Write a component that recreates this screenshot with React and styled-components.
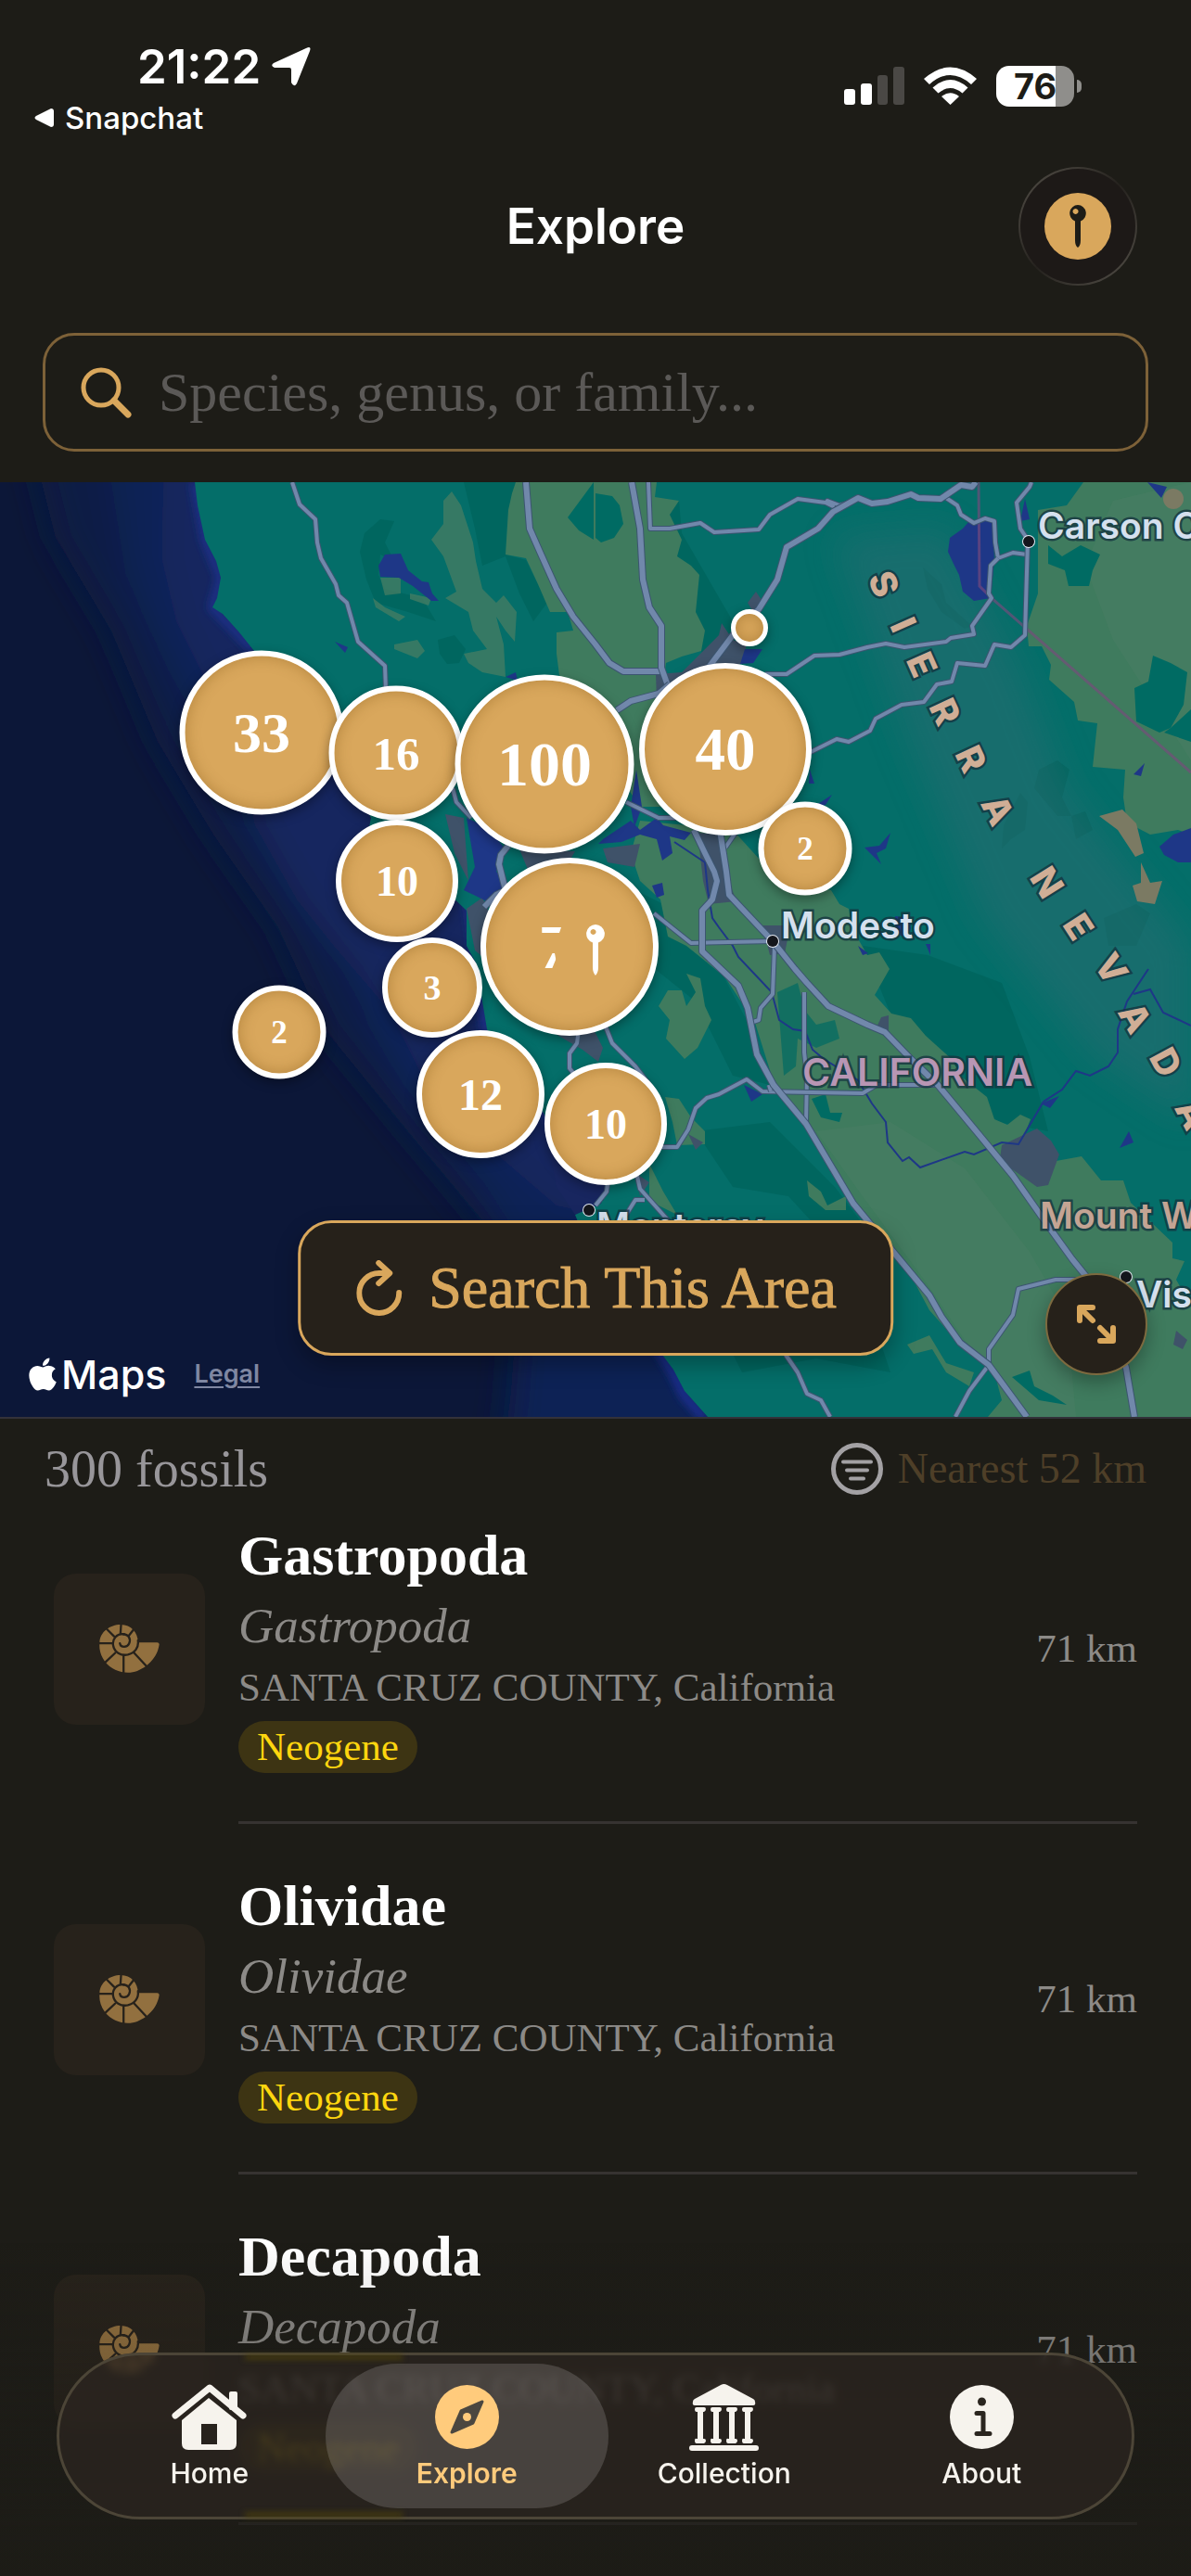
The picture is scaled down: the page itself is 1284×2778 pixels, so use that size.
import React from 'react'
import styled, { createGlobalStyle, ThemeProvider } from 'styled-components'
import { FaApple } from 'react-icons/fa'

const theme = {
  colors: {
    bg: '#1d1c17',
    gold: '#d9a75c',
    white: '#ffffff',
    muted: '#8c8a87',
    panel: '#26211a',
    line: '#363331',
    cream: '#f6f3ed',
  },
  fonts: {
    serif: '"Liberation Serif", "Times New Roman", serif',
    sans: 'Inter, "Liberation Sans", sans-serif',
  },
}

const clusters = [
  { x: 808, y: 157, size: 40 },
  { x: 282, y: 270, size: 177, count: 33 },
  { x: 782, y: 288, size: 186, count: 40 },
  { x: 427, y: 292, size: 145, count: 16 },
  { x: 587, y: 304, size: 193, count: 100 },
  { x: 868, y: 395, size: 101, count: 2 },
  { x: 428, y: 430, size: 132, count: 10 },
  { x: 466, y: 545, size: 108, count: 3 },
  { x: 614, y: 501, size: 192, count: 71, here: true },
  { x: 301, y: 593, size: 101, count: 2 },
  { x: 518, y: 660, size: 138, count: 12 },
  { x: 653, y: 692, size: 132, count: 10 },
]

const fossils = [
  { name: 'Gastropoda', place: 'SANTA CRUZ COUNTY, California', period: 'Neogene', distance: '71 km' },
  { name: 'Olividae', place: 'SANTA CRUZ COUNTY, California', period: 'Neogene', distance: '71 km' },
  { name: 'Decapoda', place: 'SANTA CRUZ COUNTY, California', period: 'Neogene', distance: '71 km' },
]

const majorRoads = [
  '567,0 571,50 582,75 600,115 618,145 642,175 657,195 672,204 713,204',
  '681,0 690,50 693,105 700,135 713,155 713,200 722,225',
  '1052,0 1048,5 1036,3 1014,18 990,17 982,13 957,21 940,23 925,17 898,32 882,50 848,70 838,105 818,137 790,165 760,205',
  '665,246 680,236 710,228 722,218',
  '748,375 760,400 770,420 773,430 768,450 757,462 757,506 796,543 806,567 816,617 834,650 869,692 920,778 1002,877 1015,900 1035,928 1066,952 1107,1008',
  '776,375 783,420 786,445 800,460 833,495 857,525 870,540 893,565 935,585 954,593 982,622 1011,650 1055,703 1092,748 1125,795 1156,838 1190,880 1214,955 1223,1008',
  '548,392 540,402 538,412 545,440 535,445 522,458',
]

const minorRoads = [
  '315,0 323,24 340,40 342,65 346,82 362,110 365,122 374,130 386,172 415,198 416,225',
  '488,330 492,345 508,362',
  '699,0 701,50 722,50 755,44 770,54 818,51 830,35 860,18 890,22 898,26 892,20 905,25 915,22',
  '1020,17 1032,25 1036,35 1050,44 1062,39 1072,42 1073,65 1076,82 1092,76 1107,78',
  '1112,0 1110,5 1096,22 1100,50 1108,62 1105,165 1090,178 1072,175 1062,198 1032,195 1026,215 1010,218 996,237 972,240 944,255 938,268 915,280 902,277 872,292',
  '1076,82 1068,90 1066,120 1069,125 1048,155 1050,164 1025,168 1020,172 975,178 955,174 935,178 905,186 878,187 848,207 825,207',
  '675,345 710,362 735,362',
  '705,465 745,497 833,495',
  '793,378 782,394',
  '835,500 833,552 820,567 818,580 812,582',
  '867,550 867,615 870,640 869,690',
  '650,580 660,605 685,630 704,655',
  '712,717 730,717 742,698 750,675 762,664 775,660 805,644 822,657 930,659 945,650 1008,650',
  '829,650 831,657',
  '642,780 654,765 656,750',
  '685,740 690,762 722,798',
  '675,790 685,774 695,774',
  '624,590 622,605 614,616 614,632 622,642',
  '847,941 860,960 870,983 885,990 895,1008',
  '1066,952 1045,980 1030,1008',
  '1066,952 1066,935 1092,898 1098,870 1138,860 1180,860',
]

const sierra = [
  ['S', 952, 110, 68],
  ['I', 973, 154, 66],
  ['E', 993, 197, 66],
  ['R', 1018, 248, 65],
  ['R', 1046, 299, 65],
  ['A', 1075, 354, 63],
  ['N', 1128, 432, 58],
  ['E', 1162, 480, 57],
  ['V', 1197, 525, 57],
  ['A', 1223, 578, 60],
  ['D', 1256, 626, 62],
  ['A', 1284, 682, 62],
]

const places = [
  { name: 'Carson City', x: 1119, y: 61, dot: [1109, 64] },
  { name: 'Modesto', x: 842, y: 492, dot: [833, 495] },
  { name: 'Monterey', x: 643, y: 816, dot: [635, 785] },
  { name: 'Visalia', x: 1225, y: 890, dot: [1214, 857] },
]

const BaseMap = () => (
  <MapCanvas viewBox='0 0 1284 1008' preserveAspectRatio='xMinYMin slice' aria-hidden='true'>
    <defs>
      <filter id='soft' x='-20%' y='-20%' width='140%' height='140%'>
        <feGaussianBlur stdDeviation='18' />
      </filter>
      <filter id='shore' x='-20%' y='-20%' width='140%' height='140%'>
        <feGaussianBlur stdDeviation='5' />
      </filter>
    </defs>

    {/* ocean */}
    <rect width='1284' height='1008' fill='#0c1738' />
    <g filter='url(#soft)'>
      <path fill='#0c1a44' d='M30 -60 L60 60 120 160 170 280 230 380 300 480 350 590 440 700 540 820 560 920 540 1060 H800 V-60Z' />
      <path fill='#0d2055' d='M110 -60 L135 100 180 200 230 290 300 400 370 500 400 590 450 680 520 760 560 860 545 1060 H860 L600 600 460 300 300 200 230 -60Z' />
      <path fill='#18265f' d='M178 -60 L174 80 190 150 215 200 255 280 275 370 320 450 360 500 420 570 460 650 530 720 600 780 640 790 680 700 540 400 400 280 270 170 240 -60Z' />
    </g>
    <path fill='none' stroke='#1c3290' strokeWidth='8' filter='url(#shore)' d='M210 0 L221 62 238 103 229 135 274 182 M505 450 L524 590 600 700' />
    <path fill='none' stroke='#1b2f92' strokeWidth='10' filter='url(#shore)' d='M640 845 L690 905 714 941 726 960 738 985 760 1010' />

    {/* land */}
    <path
      fill='#046e69'
      d='M210 0 L213 25 221 62 233 85 238 103 234 125 229 135 240 142 258 162 274 182 310 240 345 300 385 335 400 362 398 372 420 395 480 440 503 462 503 500 514 520 520 560 525 590 560 650 586 680 600 710 640 735 657 755 650 775 628 778 620 790 640 840 690 900 714 941 726 957 738 980 763 1008 H1284 V0Z'
    />
    <g fill='#00665f'>
      <path d='M393 55 L410 40 425 42 415 65 425 85 410 78 408 100 415 115 455 125 470 150 440 140 405 130 395 105 388 75Z' />
      <path d='M500 0 H556 L548 30 545 78 567 84 590 130 575 150 560 120 545 80 520 90 512 50Z' />
      <path d='M472 170 L490 165 502 180 495 195 482 196 474 185Z' />
      <path d='M708 30 L732 20 735 55 790 150 800 180 760 190 740 150Z' />
      <path d='M995 92 L1015 110 1020 130 1048 155 1040 158 1015 140 1000 115Z' />
      <path d='M1120 310 L1140 300 1153 310 1145 340 1155 360 1140 360 1115 330Z' />
      <path d='M1100 335 L1108 345 1105 375 1090 385 1080 395 1082 370Z' />
      <path d='M930 500 L1000 510 1080 540 1110 620 1130 700 1075 690 1035 640 998 597 960 573Z' />
      <path d='M685 440 L715 455 740 500 780 533 810 590 830 650 790 640 750 560 700 520Z' />
      <path d='M750 700 L830 690 900 760 930 800 905 830 850 770 790 760Z' />
      <path d='M770 900 L900 880 950 930 960 960 880 945 800 960Z' />
      <path d='M1155 360 L1170 355 1178 375 1160 385Z' />
      <path d='M1190 470 L1225 455 1240 465 1225 500 1195 500Z' />
    </g>
    <path
      fill='#2a6d72'
      opacity='.5'
      filter='url(#soft)'
      d='M900 60 L1020 50 1100 200 1150 330 1220 420 1284 500 V690 L1180 620 1060 470 980 280Z'
    />

    {/* valleys and farmland */}
    <g fill='#3f7b5e'>
      <path d='M556 0 L552 12 548 30 545 78 567 82 580 110 593 140 612 140 618 160 600 162 600 185 603 208 620 240 670 320 690 350 730 350 712 240 718 195 735 188 756 182 760 160 750 140 754 100 745 90 730 80 735 62 722 35 732 20 706 16 708 0Z' />
      <path d='M690 365 L790 375 840 430 896 440 905 455 915 460 918 480 935 510 948 507 959 525 943 553 961 573 982 578 998 597 1027 623 1035 640 1064 663 1072 687 1086 693 1100 682 1111 687 1104 705 1133 733 1166 727 1187 753 1211 753 1219 777 1264 820 1264 837 1277 840 1268 860 1281 883 1284 890 V1008 H1065 L1080 990 1072 960 1035 930 1002 893 970 833 929 790 888 727 834 647 814 583 781 533 740 500 720 490 712 450 690 430 680 400Z' />
      <path d='M1168 0 L1150 25 1119 30 1119 120 1107 155 1109 177 1123 177 1133 197 1131 213 1158 237 1162 257 1183 260 1178 307 1213 310 1211 340 1215 367 1240 380 1270 375 1284 380 V0Z' />
      <path d='M978 930 L1002 920 1020 950 1050 960 1045 975 1020 960 1005 935 985 940Z' />
      <path d='M740 565 L750 550 740 530 755 535 760 565 767 580 752 610 738 622 718 600 722 580 710 565 720 548 735 548Z' />
      <path d='M717 663 L732 665 745 685 760 700 760 714 730 715 725 690Z' />
      <path d='M700 735 L715 765 730 790 700 775Z' />
      <path d='M870 753 L885 765 892 780 912 770 912 785 890 785 872 770Z' />
    </g>
    <g fill='#477d63'>
      <path d='M487 10 L497 25 510 65 513 85 520 115 535 130 543 122 557 140 555 172 545 160 535 145 543 175 545 210 520 205 505 195 500 185 525 180 510 160 505 140 480 125 492 118 478 80 465 62 478 45 478 20Z' opacity='.75' />
      <path d='M410 103 H432 V120 L415 122Z M402 125 L415 135 437 145 430 150 405 135Z M442 120 L465 125 462 133 442 126Z M425 175 L450 170 458 182 450 190 425 180Z' opacity='.75' />
      <path d='M880 700 L960 690 1040 740 1110 830 1150 900 1160 1008 H1110 L1040 925 1000 865 930 770Z' opacity='.7' />
      <path d='M1200 20 L1284 0 V300 L1200 170 1170 90Z' opacity='.7' />
    </g>
    <g fill='#006b63'>
      <path d='M642 12 L660 15 668 25 672 45 662 60 648 65 642 60Z' />
      <path d='M640 0 L612 38 624 52 640 62Z' />
      <path d='M1130 68 L1145 80 1165 68 1186 78 1178 95 1174 112 1152 112 1148 95 1130 88Z' />
      <path d='M1243 187 L1262 195 1280 205 1276 240 1262 265 1250 270 1225 258 1223 222 1238 215Z' />
      <path d='M1262 265 L1284 245 V280 L1255 270Z' />
      <path d='M838 550 L845 640 858 630 860 600 880 610 905 600 900 580 880 585 868 570 860 540Z' opacity='.7' />
      <path d='M875 665 L890 660 895 680 908 680 905 690 885 685Z' />
      <path d='M1091 965 L1110 958 1115 975 1135 985 1150 995 1120 990Z' />
    </g>
    <g fill='#3f5269'>
      <path d='M775 165 L778 152 790 170 805 175 800 195 770 212 722 228 708 235 707 207 735 205 750 190Z' />
      <path d='M815 118 L823 130 815 145 806 130Z' />
      <path d='M752 378 L778 380 782 420 794 452 764 455 758 430Z' />
      <path d='M822 478 L852 478 846 508 830 510Z' />
      <path d='M1080 715 L1118 697 1133 710 1142 725 1130 758 1118 760 1090 740 1078 730Z' />
      <path d='M950 577 L958 575 958 592 945 588Z' />
      <path d='M503 460 L520 448 535 480 530 520 512 505Z M590 590 L640 590 650 610 645 625 628 612Z' />
      <path d='M560 396 L620 398 610 415 570 420Z M480 358 L500 362 505 430 490 400Z' />
      <path d='M650 395 L690 390 684 415 655 410Z M742 703 L758 712 750 720Z M685 745 L700 755 690 770Z' />
      <path d='M1268 915 L1280 925 1275 935 1265 930Z' />
    </g>

    {/* lakes, bay and delta */}
    <g fill='#1e3787'>
      <path d='M408 90 L415 78 432 77 440 95 455 107 462 108 466 120 473 128 465 128 445 112 430 103 410 102Z' />
      <path d='M361 172 L375 178 372 184Z' />
      <path d='M1045 42 L1070 40 1072 85 1068 125 1050 128 1038 118 1034 100 1028 88 1022 75 1024 60 1038 50Z' />
      <path d='M1105 18 L1110 40 1100 42Z M1237 0 L1258 5 1252 17Z' />
      <path d='M803 180 L822 180 812 195 798 196Z M545 210 L556 205 558 214Z' />
      <path d='M503 362 L525 372 545 396 535 420 560 445 540 470 525 452 500 440 512 415Z' />
      <path d='M650 385 L680 365 690 375 708 362 715 370 745 378 738 386 722 382 725 400 714 408 708 385 690 380 670 388 645 390Z' />
      <path d='M686 310 L692 350 684 372 680 350Z M873 310 L878 325 872 325Z M885 345 L897 337 890 348 870 352Z' />
      <path d='M932 394 L948 392 960 378 955 395 945 400 950 412Z' />
      <path d='M965 468 L980 470 982 482 972 490 965 480Z M925 500 L936 508 930 510Z M998 498 H1003 V510Z' />
      <path d='M703 435 L714 432 716 445 708 448Z' />
      <path d='M802 650 L822 660 810 668Z' />
      <path d='M1250 393 L1265 380 1284 373 V410 L1270 410 1255 402Z' />
      <path d='M1222 315 L1234 303 1230 317Z M1217 700 L1222 712 1207 718Z M1122 670 L1142 662 1132 675Z' />
      <path d='M592 720 L640 738 655 755 648 778 620 790 600 760Z' fill='#18265f' />
    </g>
    <g fill='#7b7a63'>
      <path d='M1185 360 L1210 353 1225 368 1233 400 1224 404 1205 375Z' />
      <path d='M1230 410 L1240 432 1253 430 1245 455 1226 452 1221 435 1230 432Z' />
      <circle cx='1265' cy='18' r='11' />
    </g>

    <g fill='none' stroke='#1e3787' strokeWidth='2'>
      <polyline points='727,388 760,410 763,440 768,470 775,480 790,500 796,512 832,550 840,580 855,590 868,592 876,612 888,622 925,645 940,670 955,690 957,712 973,732 980,728 992,739 1040,722 1050,725 1080,712 1098,714 1125,668 1145,655 1160,635 1175,640 1195,630 1205,615 1205,590 1215,560 1238,525' />
      <polyline points='1222,552 1240,547 1254,572 1284,586' />
    </g>
    <polyline points='1055,0 1056,112 1070,126 1284,313' fill='none' stroke='#7a4a7c' strokeWidth='3' opacity='.65' />

    {/* roads, dark casing under a lighter line */}
    <g fill='none' strokeLinejoin='round'>
      {minorRoads.map((points) => (
        <g key={points}>
          <polyline points={points} stroke='#3c5570' strokeWidth='6' />
          <polyline points={points} stroke='#7188ab' strokeWidth='4' />
        </g>
      ))}
      {majorRoads.map((points) => (
        <g key={points}>
          <polyline points={points} stroke='#3c5570' strokeWidth='8' />
          <polyline points={points} stroke='#7188ab' strokeWidth='6' />
        </g>
      ))}
    </g>

    <MapText $color='#d0ae96' $bold textAnchor='middle'>
      {sierra.map(([letter, x, y, angle]) => (
        <text key={x} transform={`translate(${x} ${y}) rotate(${angle})`} dy='13'>
          {letter}
        </text>
      ))}
    </MapText>
    <MapText $color='#b896b4' $size={41}>
      <text x='865' y='651'>CALIFORNIA</text>
    </MapText>
    <MapText $color='#c4a494'>
      <text x='1121' y='805'>Mount Whitney</text>
    </MapText>
    <MapText $color='#d5e0ee'>
      {places.map((place) => (
        <g key={place.name}>
          <circle cx={place.dot[0]} cy={place.dot[1]} r='6' fill='#14161c' stroke='#e4eaf2' strokeWidth='2' />
          <text x={place.x} y={place.y}>{place.name}</text>
        </g>
      ))}
    </MapText>
  </MapCanvas>
)

const PinIcon = () => (
  <svg width='20' height='46' viewBox='0 0 20 46'>
    <path
      fill='currentColor'
      fillRule='evenodd'
      d='M10 0a9 9 0 0 1 3 17.400V38q0 6-3 8-3-2-3-8V17.400A9 9 0 0 1 10 0ZM7.500 4a3 3 0 1 0 .1 0Z'
    />
  </svg>
)

const AmmoniteIcon = () => (
  <svg width='65' height='52' viewBox='143 188 194 157'>
    <path
      fill='#92703f'
      d='M330 246Q338 246 337 254C333 280 318 305 295 322C275 336 257 344 235 344C208 344 178 332 160 308C146 288 141 270 143 245C145 212 176 188 212 188C246 188 268 214 268 246Z'
    />
    <g fill='none' stroke='#27221b' strokeWidth='7' strokeLinecap='round'>
      <path d='M222 219C198 216 184 236 187 255C190 278 212 290 235 286C258 281 271 262 268 240' />
      <path d='M209 249C212 264 233 263 239 250C246 234 237 219 218 219' />
      <path d='M213 186L211 217M252 206L238 224M167 203L190 226M141 249H187M160 312L194 280M221 347V288M296 324L256 281' />
    </g>
  </svg>
)

const HomeIcon = () => (
  <svg width='81' height='71' viewBox='0 0 81 71' fill='currentColor'>
    <path d='M4 34L41 4L77 34' fill='none' stroke='currentColor' strokeWidth='7' strokeLinecap='round' strokeLinejoin='round' />
    <rect x='62' y='8' width='9' height='20' rx='2' />
    <path fillRule='evenodd' d='M11 39L40 15L70 39V64Q70 71 63 71H18Q11 71 11 64ZM32 43V65H49V43Z' />
  </svg>
)

const CompassIcon = () => (
  <svg width='69' height='69' viewBox='0 0 69 69'>
    <circle cx='34.500' cy='34.500' r='34.500' fill='currentColor' />
    <path d='M51 18L41 41L18 51L28 28Z' fill='#4b4740' stroke='#4b4740' strokeWidth='3' strokeLinejoin='round' />
    <circle cx='34.500' cy='34.500' r='4.500' fill='currentColor' />
  </svg>
)

const MuseumIcon = () => (
  <svg width='75' height='73' viewBox='0 0 75 73' fill='currentColor'>
    <path d='M6 24Q3 24 4 20Q4 18 6 17L34 2Q37.500 0 41 2L69 17Q71 18 71 20Q72 24 69 24Z' />
    {[12, 29, 46, 63].map((x) => (
      <path key={x} d={`M${x - 6} 28q0-2 2-2h8q2 0 2 2t-2 3h-1v29h1q2 0 2 2t-2 3h-8q-2 0-2-3t2-2h1V31h-1q-2 0-2-3Z`} />
    ))}
    <rect y='67' width='75' height='6' rx='3' />
  </svg>
)

const InfoIcon = () => (
  <svg width='69' height='69' viewBox='0 0 69 69'>
    <circle cx='34.500' cy='34.500' r='34.500' fill='currentColor' />
    <circle cx='34.500' cy='18' r='4.500' fill='#2a251f' />
    <path d='M29 30.500H36V52M29 52.500H43' fill='none' stroke='#2a251f' strokeWidth='5' strokeLinecap='round' strokeLinejoin='round' />
  </svg>
)

const tabs = [
  { label: 'Home', icon: HomeIcon },
  { label: 'Explore', icon: CompassIcon, active: true },
  { label: 'Collection', icon: MuseumIcon },
  { label: 'About', icon: InfoIcon },
]

const App = () => {
  return (
    <ThemeProvider theme={theme}>
      <GlobalStyle />
      <Screen>
        <StatusBar>
          <StatusLeft>
            <Clock>
              21:22
              <svg width='42' height='42' viewBox='0 0 42 42'>
                <path d='M37 1Q43 -2 41 4L27 39Q24 44 21 38V24Q21 22 19 22L3 22Q-2 20 2 17Z' fill='#fff' />
              </svg>
            </Clock>
            <BackLink href='#snapchat'>
              <svg width='21' height='20' viewBox='0 0 21 20'>
                <path d='M18 0Q21 0 21 3V17Q21 20 18 20L2 12Q-1 10 2 8Z' fill='#fff' />
              </svg>
              Snapchat
            </BackLink>
          </StatusLeft>
          <StatusRight>
            <svg width='65' height='42' viewBox='0 0 65 42'>
              <rect x='0' y='24' width='12' height='17' rx='3' fill='#fff' />
              <rect x='18' y='18' width='12' height='23' rx='3' fill='#fff' />
              <rect x='36' y='9' width='11' height='32' rx='3' fill='#4a4845' />
              <rect x='53' y='0' width='12' height='41' rx='3' fill='#4a4845' />
            </svg>
            <svg width='57' height='42' viewBox='0 0 57 42' fill='#fff'>
              <path d='M28.500 41L19 32Q28.500 24.500 38 32Z' />
              <path d='M15.500 28.500L9.500 22.500Q28.500 5.500 47.500 22.500L41.500 28.500Q28.500 17.500 15.500 28.500Z' />
              <path d='M6 19L0 13Q28.500 -12 57 13L51 19Q28.500 -1 6 19Z' />
            </svg>
            <Battery>
              <BatteryBody>76</BatteryBody>
              <BatteryNub />
            </Battery>
          </StatusRight>
        </StatusBar>

        <Header>
          <Title>Explore</Title>
          <PinButton type='button' aria-label='My location'>
            <PinDisc>
              <PinIcon />
            </PinDisc>
          </PinButton>
        </Header>

        <SearchBox>
          <svg width='56' height='56' viewBox='0 0 56 56' fill='none' stroke='#d9a75c' strokeWidth='5' strokeLinecap='round'>
            <circle cx='22' cy='23' r='19' />
            <path d='M36 37L51 52' strokeWidth='7' />
          </svg>
          <SearchInput type='search' aria-label='Search fossils' placeholder='Species, genus, or family...' />
        </SearchBox>

        <MapPanel>
          <BaseMap />
          {clusters.map((cluster) => (
            <Cluster key={`${cluster.x}-${cluster.y}`} $x={cluster.x} $y={cluster.y} $size={cluster.size}>
              {cluster.count}
              {cluster.here && (
                <HereMark viewBox='0 0 192 192'>
                  <path fill='#d9a75c' d='M90 66H140V124H84L80 103H60V81H85Z' />
                  <path
                    fill='#fff'
                    fillRule='evenodd'
                    d='M124 72a10 10 0 0 1 3 19.500V118q0 6-3 9-3-3-3-9V91.500A10 10 0 0 1 124 72ZM121.500 77a3 3 0 1 0 .1 0Z'
                  />
                </HereMark>
              )}
            </Cluster>
          ))}
          <MapFooter>
            <MapBrand>
              <FaApple size='40' />
              Maps
            </MapBrand>
            <LegalLink href='#legal'>Legal</LegalLink>
          </MapFooter>
          <SearchArea type='button'>
            <svg width='50' height='60' viewBox='0 0 50 60' fill='none' stroke='currentColor' strokeWidth='6' strokeLinecap='round' strokeLinejoin='round'>
              <path d='M46 35A21.500 21.500 0 1 1 25 14H35' />
              <path d='M24 3L36 14L24 25' />
            </svg>
            Search This Area
          </SearchArea>
          <ExpandButton type='button' aria-label='Expand map'>
            <svg width='44' height='44' viewBox='0 0 44 44' fill='none' stroke='currentColor' strokeWidth='6' strokeLinecap='round' strokeLinejoin='round'>
              <path d='M4 18V4H18M5 5L18 18M40 26V40H26M39 39L26 26' />
            </svg>
          </ExpandButton>
        </MapPanel>

        <ListHeader>
          <Count>300 fossils</Count>
          <SortButton type='button'>
            <svg width='56' height='56' viewBox='0 0 56 56' fill='none' stroke='#a3a1a4' strokeWidth='4' strokeLinecap='round'>
              <circle cx='28' cy='28' r='25.500' strokeWidth='5' />
              <path d='M13 20.500H43M17 29.500H39M21 38.500H35' />
            </svg>
            Nearest 52 km
          </SortButton>
        </ListHeader>

        <List>
          {fossils.map((fossil) => (
            <Row key={fossil.name}>
              <Thumb>
                <AmmoniteIcon />
              </Thumb>
              <Details>
                <Name>{fossil.name}</Name>
                <Taxon>{fossil.name}</Taxon>
                <Place>{fossil.place}</Place>
                <Period>{fossil.period}</Period>
              </Details>
              <Distance>{fossil.distance}</Distance>
            </Row>
          ))}
        </List>

        <BottomFade />
        <TabBar>
          <Glint />
          {tabs.map(({ label, icon: Icon, active }) => (
            <Tab key={label} href={`#${label.toLowerCase()}`} $active={active}>
              <IconSlot>
                <Icon />
              </IconSlot>
              {label}
            </Tab>
          ))}
        </TabBar>
      </Screen>
    </ThemeProvider>
  )
}

const GlobalStyle = createGlobalStyle`
  * {
    box-sizing: border-box;
  }

  body {
    margin: 0;
    background: #1d1c17;
  }

  svg {
    display: block;
    flex-shrink: 0;
  }
`

const Screen = styled.main`
  position: relative;
  overflow: hidden;
  background: ${({ theme }) => theme.colors.bg};
  color: ${({ theme }) => theme.colors.white};
  font-family: ${({ theme }) => theme.fonts.serif};
`

const StatusBar = styled.div`
  display: flex;
  justify-content: space-between;
  align-items: flex-start;
  padding: 41px 118px 0 37px;
  font-family: ${({ theme }) => theme.fonts.sans};
`

const StatusLeft = styled.div`
  display: flex;
  flex-direction: column;
  gap: 4px;
`

const Clock = styled.div`
  display: flex;
  align-items: center;
  gap: 12px;
  padding-left: 111px;
  font-size: 51px;
  font-weight: 600;
  line-height: 62px;
`

const BackLink = styled.a`
  display: flex;
  align-items: center;
  gap: 12px;
  color: inherit;
  font-size: 33px;
  font-weight: 500;
  line-height: 40px;
  text-decoration: none;
`

const StatusRight = styled.div`
  display: flex;
  align-items: center;
  gap: 21px;
  padding-top: 30px;
`

const Battery = styled.div`
  display: flex;
  align-items: center;
  gap: 3px;
`

const BatteryBody = styled.div`
  width: 84px;
  height: 44px;
  border-radius: 14px;
  background: linear-gradient(90deg, #fff 76%, #8f8e8b 76%);
  color: ${({ theme }) => theme.colors.bg};
  font-size: 38px;
  font-weight: 700;
  line-height: 44px;
  text-align: center;
`

const BatteryNub = styled.div`
  width: 5px;
  height: 14px;
  border-radius: 0 6px 6px 0;
  background: #8f8e8b;
`

const Header = styled.header`
  display: grid;
  grid-template-columns: 1fr auto 1fr;
  align-items: center;
  padding: 33px 58px 51px;
`

const Title = styled.h1`
  grid-column: 2;
  margin: 0;
  font-family: ${({ theme }) => theme.fonts.sans};
  font-size: 53px;
  font-weight: 600;
  line-height: 64px;
`

const PinButton = styled.button`
  display: flex;
  align-items: center;
  justify-content: center;
  justify-self: end;
  width: 128px;
  height: 128px;
  padding: 0;
  border: 2px solid transparent;
  border-radius: 50%;
  background: linear-gradient(#1d1917, #1d1917) padding-box,
    linear-gradient(135deg, #55514a, #25221e 50%, #55514a) border-box;
`

const PinDisc = styled.span`
  display: flex;
  align-items: center;
  justify-content: center;
  width: 72px;
  height: 72px;
  border-radius: 50%;
  background: ${({ theme }) => theme.colors.gold};
  color: ${({ theme }) => theme.colors.bg};
`

const SearchBox = styled.label`
  display: flex;
  align-items: center;
  gap: 28px;
  height: 128px;
  margin: 0 46px 33px;
  padding: 0 38px;
  border: 3px solid #7d6138;
  border-radius: 34px;
`

const SearchInput = styled.input`
  flex: 1;
  min-width: 0;
  padding: 0;
  border: 0;
  outline: 0;
  background: transparent;
  color: ${({ theme }) => theme.colors.white};
  font-family: inherit;
  font-size: 60px;
  line-height: 72px;

  &::placeholder {
    color: #5b5957;
    opacity: 1;
  }
`

const MapPanel = styled.section`
  position: relative;
  height: 1010px;
  overflow: hidden;
  border-bottom: 2px solid #33323a;
`

const MapCanvas = styled.svg`
  width: 100%;
  height: 100%;
`

const MapText = styled.g`
  fill: ${({ $color }) => $color};
  stroke: rgba(20, 50, 62, 0.75);
  stroke-width: 5px;
  paint-order: stroke;
  font-family: ${({ theme }) => theme.fonts.sans};
  font-size: ${({ $size = 39 }) => $size}px;
  font-weight: ${({ $bold }) => ($bold ? 800 : 600)};
`

const Cluster = styled.div`
  position: absolute;
  left: ${({ $x }) => $x}px;
  top: ${({ $y }) => $y}px;
  display: flex;
  align-items: center;
  justify-content: center;
  width: ${({ $size }) => $size}px;
  height: ${({ $size }) => $size}px;
  transform: translate(-50%, -50%);
  border: ${({ $size }) => ($size > 60 ? 6 : 5)}px solid #fff;
  border-radius: 50%;
  background: ${({ theme }) => theme.colors.gold};
  box-shadow: 0 4px 12px rgba(0, 0, 0, 0.35), inset 0 0 16px rgba(110, 70, 10, 0.35);
  font-size: ${({ $size }) => Math.round($size * 0.35)}px;
  font-weight: 700;
`

const HereMark = styled.svg`
  position: absolute;
  inset: -6px;
`

const MapFooter = styled.div`
  position: absolute;
  left: 26px;
  bottom: 18px;
  display: flex;
  align-items: center;
  gap: 30px;
  font-family: ${({ theme }) => theme.fonts.sans};
`

const MapBrand = styled.span`
  display: flex;
  align-items: center;
  font-size: 43px;
  font-weight: 500;
  line-height: 56px;
`

const LegalLink = styled.a`
  color: #7f87a2;
  font-size: 27px;
  font-weight: 600;
  line-height: 32px;
  text-underline-offset: 4px;
`

const SearchArea = styled.button`
  position: absolute;
  left: 50%;
  bottom: 66px;
  display: flex;
  align-items: center;
  gap: 28px;
  height: 146px;
  padding: 0 58px 0 60px;
  transform: translateX(-50%);
  border: 3px solid ${({ theme }) => theme.colors.gold};
  border-radius: 36px;
  background: ${({ theme }) => theme.colors.panel};
  box-shadow: 0 10px 24px rgba(0, 0, 0, 0.3);
  color: ${({ theme }) => theme.colors.gold};
  font-family: inherit;
  font-size: 64px;
  line-height: 72px;
  white-space: nowrap;
  -webkit-text-stroke: 1px currentColor;
`

const ExpandButton = styled.button`
  position: absolute;
  right: 47px;
  bottom: 45px;
  display: flex;
  align-items: center;
  justify-content: center;
  width: 110px;
  height: 110px;
  padding: 0;
  border: 2px solid #7d6a3f;
  border-radius: 50%;
  background: ${({ theme }) => theme.colors.panel};
  box-shadow: 0 8px 20px rgba(0, 0, 0, 0.3);
  color: ${({ theme }) => theme.colors.gold};
`

const ListHeader = styled.div`
  display: flex;
  align-items: center;
  justify-content: space-between;
  height: 108px;
  padding: 0 48px;
`

const Count = styled.h2`
  margin: 0;
  color: #98969a;
  font-size: 56px;
  font-weight: 400;
  line-height: 64px;
`

const SortButton = styled.button`
  display: flex;
  align-items: center;
  gap: 16px;
  padding: 0;
  border: 0;
  background: none;
  color: #4e3f28;
  font-family: inherit;
  font-size: 46px;
  line-height: 56px;
`

const List = styled.ul`
  margin: 0;
  padding: 6px 58px 0;
  list-style: none;
`

const Row = styled.li`
  display: grid;
  grid-template-columns: 163px 1fr auto;
  column-gap: 36px;
  align-items: center;
  padding-bottom: 55px;

  &::after {
    content: '';
    grid-column: 2 / -1;
    height: 3px;
    margin-top: 52px;
    background: ${({ theme }) => theme.colors.line};
  }
`

const Thumb = styled.div`
  display: flex;
  align-items: center;
  justify-content: center;
  height: 163px;
  border-radius: 24px;
  background: #27221b;
`

const Details = styled.div`
  display: flex;
  flex-direction: column;
  align-items: flex-start;
  gap: 12px;
`

const Name = styled.h3`
  margin: 0;
  font-size: 62px;
  font-weight: 700;
  line-height: 66px;
`

const Taxon = styled.em`
  color: ${({ theme }) => theme.colors.muted};
  font-size: 53px;
  line-height: 62px;
`

const Place = styled.span`
  color: ${({ theme }) => theme.colors.muted};
  font-size: 43px;
  line-height: 48px;
`

const Period = styled.span`
  height: 56px;
  padding: 0 20px;
  border-radius: 28px;
  background: #3d3413;
  color: #fdd60f;
  font-size: 43px;
  line-height: 56px;
`

const Distance = styled.span`
  color: ${({ theme }) => theme.colors.muted};
  font-size: 43px;
  line-height: 48px;
`

const BottomFade = styled.div`
  position: fixed;
  right: 0;
  bottom: 0;
  left: 0;
  height: 360px;
  background: linear-gradient(transparent, rgba(29, 28, 23, 0.15) 30%, rgba(29, 28, 23, 0.7) 90%);
  pointer-events: none;
`

const TabBar = styled.nav`
  position: fixed;
  right: 61px;
  bottom: 61px;
  left: 61px;
  display: grid;
  grid-template-columns: repeat(4, 1fr);
  height: 180px;
  padding: 9px 23px;
  border: 3px solid #4c4537;
  border-radius: 90px;
  background: rgba(43, 37, 31, 0.76);
  backdrop-filter: blur(4px);
`

const Glint = styled.span`
  position: absolute;
  top: 0;
  bottom: 0;
  left: 200px;
  width: 170px;
  border: solid #4f4409;
  border-width: 4px 0;
  filter: blur(3px);
`

const Tab = styled.a`
  position: relative;
  display: flex;
  flex-direction: column;
  align-items: center;
  gap: 6px;
  margin: 0 -14px;
  padding-top: 20px;
  border-radius: 78px;
  background: ${({ $active }) => ($active ? 'rgba(255, 255, 255, 0.15)' : 'transparent')};
  color: ${({ $active, theme }) => ($active ? '#ffcb7c' : theme.colors.cream)};
  font-family: ${({ theme }) => theme.fonts.sans};
  font-size: 30px;
  font-weight: ${({ $active }) => ($active ? 600 : 500)};
  line-height: 36px;
  text-decoration: none;
`

const IconSlot = styled.span`
  display: flex;
  align-items: center;
  height: 74px;
`

export default App
